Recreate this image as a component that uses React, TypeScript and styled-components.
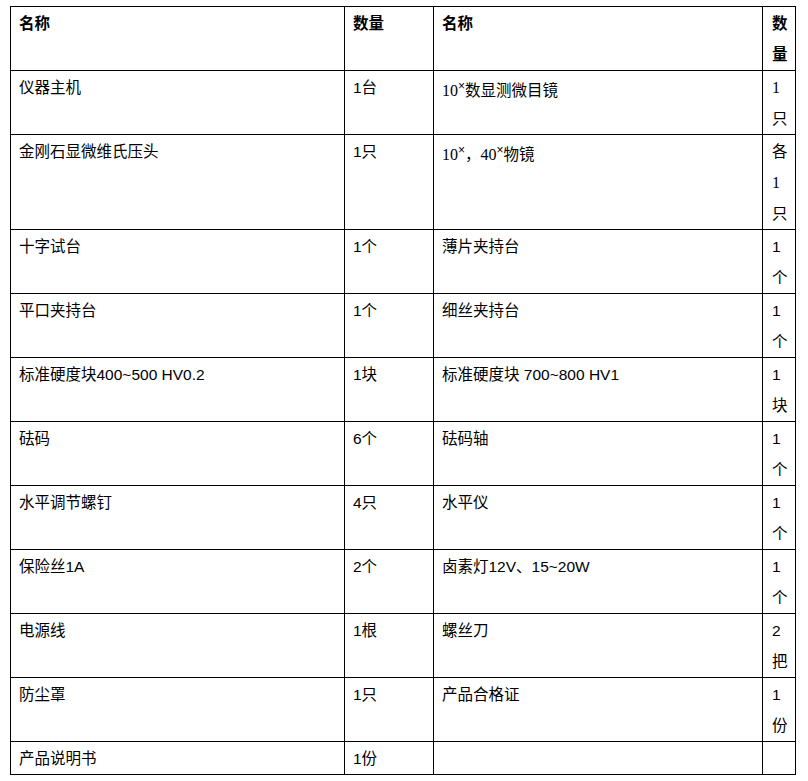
import React from "react";
import styled, { createGlobalStyle } from "styled-components";

const Global = createGlobalStyle`
  html, body { margin: 0; padding: 0; background: #ffffff; }
  body { font-family: "Liberation Sans", "Noto Sans CJK SC", sans-serif; color: #000; }
`;

const Page = styled.div`
  padding: 6px 0 0 10px;
`;

const Table = styled.table`
  border-collapse: collapse;
  table-layout: fixed;
  width: 785px;
  font-size: 15.5px;
  line-height: 31px;
`;

const Cell = styled.td<{ $head?: boolean; $low?: boolean }>`
  border: 1px solid #000;
  vertical-align: top;
  padding: ${(p) => (p.$low ? "4px" : "1px")} 8px 0 8px;
  font-weight: ${(p) => (p.$head ? 700 : 400)};
  word-break: break-all;
  text-align: left;
`;

const NarrowCell = styled(Cell)`
  padding: 1px 4px 0 9px;
`;

const Serif = styled.span`
  font-family: "Liberation Serif", "Noto Sans CJK SC", serif;
  font-size: 16px;
`;

const Sup = styled.sup`
  font-family: "Liberation Sans", sans-serif;
  font-size: 12px;
  line-height: 0;
  vertical-align: 6px;
`;

type Row = {
  a: React.ReactNode;
  b: React.ReactNode;
  c: React.ReactNode;
  d: React.ReactNode;
  low?: boolean;
};

const rows: Row[] = [
  {
    a: "仪器主机",
    b: "1台",
    c: (
      <>
        <Serif>10</Serif>
        <Sup>×</Sup>数显测微目镜
      </>
    ),
    d: (
      <>
        <Serif>1</Serif>只
      </>
    ),
    low: true,
  },
  {
    a: "金刚石显微维氏压头",
    b: "1只",
    c: (
      <>
        <Serif>10</Serif>
        <Sup>×</Sup>，<Serif>40</Serif>
        <Sup>×</Sup>物镜
      </>
    ),
    d: (
      <>
        各<Serif>1</Serif>只
      </>
    ),
    low: true,
  },
  { a: "十字试台", b: "1个", c: "薄片夹持台", d: "1个" },
  { a: "平口夹持台", b: "1个", c: "细丝夹持台", d: "1个" },
  { a: "标准硬度块400~500 HV0.2", b: "1块", c: "标准硬度块 700~800 HV1", d: "1块" },
  { a: "砝码", b: "6个", c: "砝码轴", d: "1个" },
  { a: "水平调节螺钉", b: "4只", c: "水平仪", d: "1个" },
  { a: "保险丝1A", b: "2个", c: "卤素灯12V、15~20W", d: "1个" },
  { a: "电源线", b: "1根", c: "螺丝刀", d: "2把" },
  { a: "防尘罩", b: "1只", c: "产品合格证", d: "1份" },
  { a: "产品说明书", b: "1份", c: "", d: "" },
];

export default function App() {
  return (
    <>
      <Global />
      <Page>
        <Table>
          <colgroup>
            <col style={{ width: 334 }} />
            <col style={{ width: 89 }} />
            <col style={{ width: 329 }} />
            <col style={{ width: 33 }} />
          </colgroup>
          <tbody>
            <tr>
              <Cell $head>名称</Cell>
              <Cell $head>数量</Cell>
              <Cell $head>名称</Cell>
              <NarrowCell $head>数量</NarrowCell>
            </tr>
            {rows.map((r, i) => (
              <tr key={i}>
                <Cell>{r.a}</Cell>
                <Cell>{r.b}</Cell>
                <Cell $low={r.low}>{r.c}</Cell>
                <NarrowCell>{r.d}</NarrowCell>
              </tr>
            ))}
          </tbody>
        </Table>
      </Page>
    </>
  );
}
